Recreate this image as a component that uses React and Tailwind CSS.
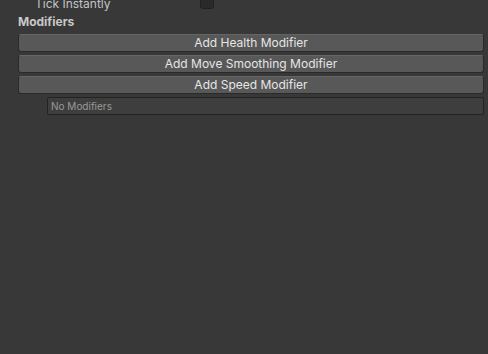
export default function App() {
  const buttons = ["Add Health Modifier", "Add Move Smoothing Modifier", "Add Speed Modifier"];

  return (
    <div
      className="w-[488px] h-[354px] overflow-hidden bg-[#383838] text-[12px] text-[#c4c4c4]"
      style={{ fontFamily: "Inter, 'Liberation Sans', sans-serif" }}
    >
      <div className="-mt-[5px] flex h-[18px] items-center">
        <span className="pl-[35px] w-[200px]">Tick Instantly</span>
        <div className="mb-[4px] h-[14px] w-[14px] rounded-[3px] border border-[#212121] bg-[#2a2a2a]" />
      </div>
      <div className="flex h-[18px] items-center pl-[18px] font-bold text-[#c8c8c8]">Modifiers</div>
      <div className="mt-[3px] flex flex-col gap-[3px] pl-[18px] pr-[4px]">
        {buttons.map((label) => (
          <button
            key={label}
            className="h-[18px] w-full rounded-[3px] border border-[#2a2a2a] border-t-[#656565] bg-[#585858] text-[12px] leading-none text-[#e6e6e6]"
          >
            {label}
          </button>
        ))}
        <div className="ml-[29px] flex h-[18px] items-center rounded-[2px] border border-[#232323] bg-[#3e3e3e] pl-[3px] text-[10px] text-[#9a9a9a]">
          No Modifiers
        </div>
      </div>
    </div>
  );
}
